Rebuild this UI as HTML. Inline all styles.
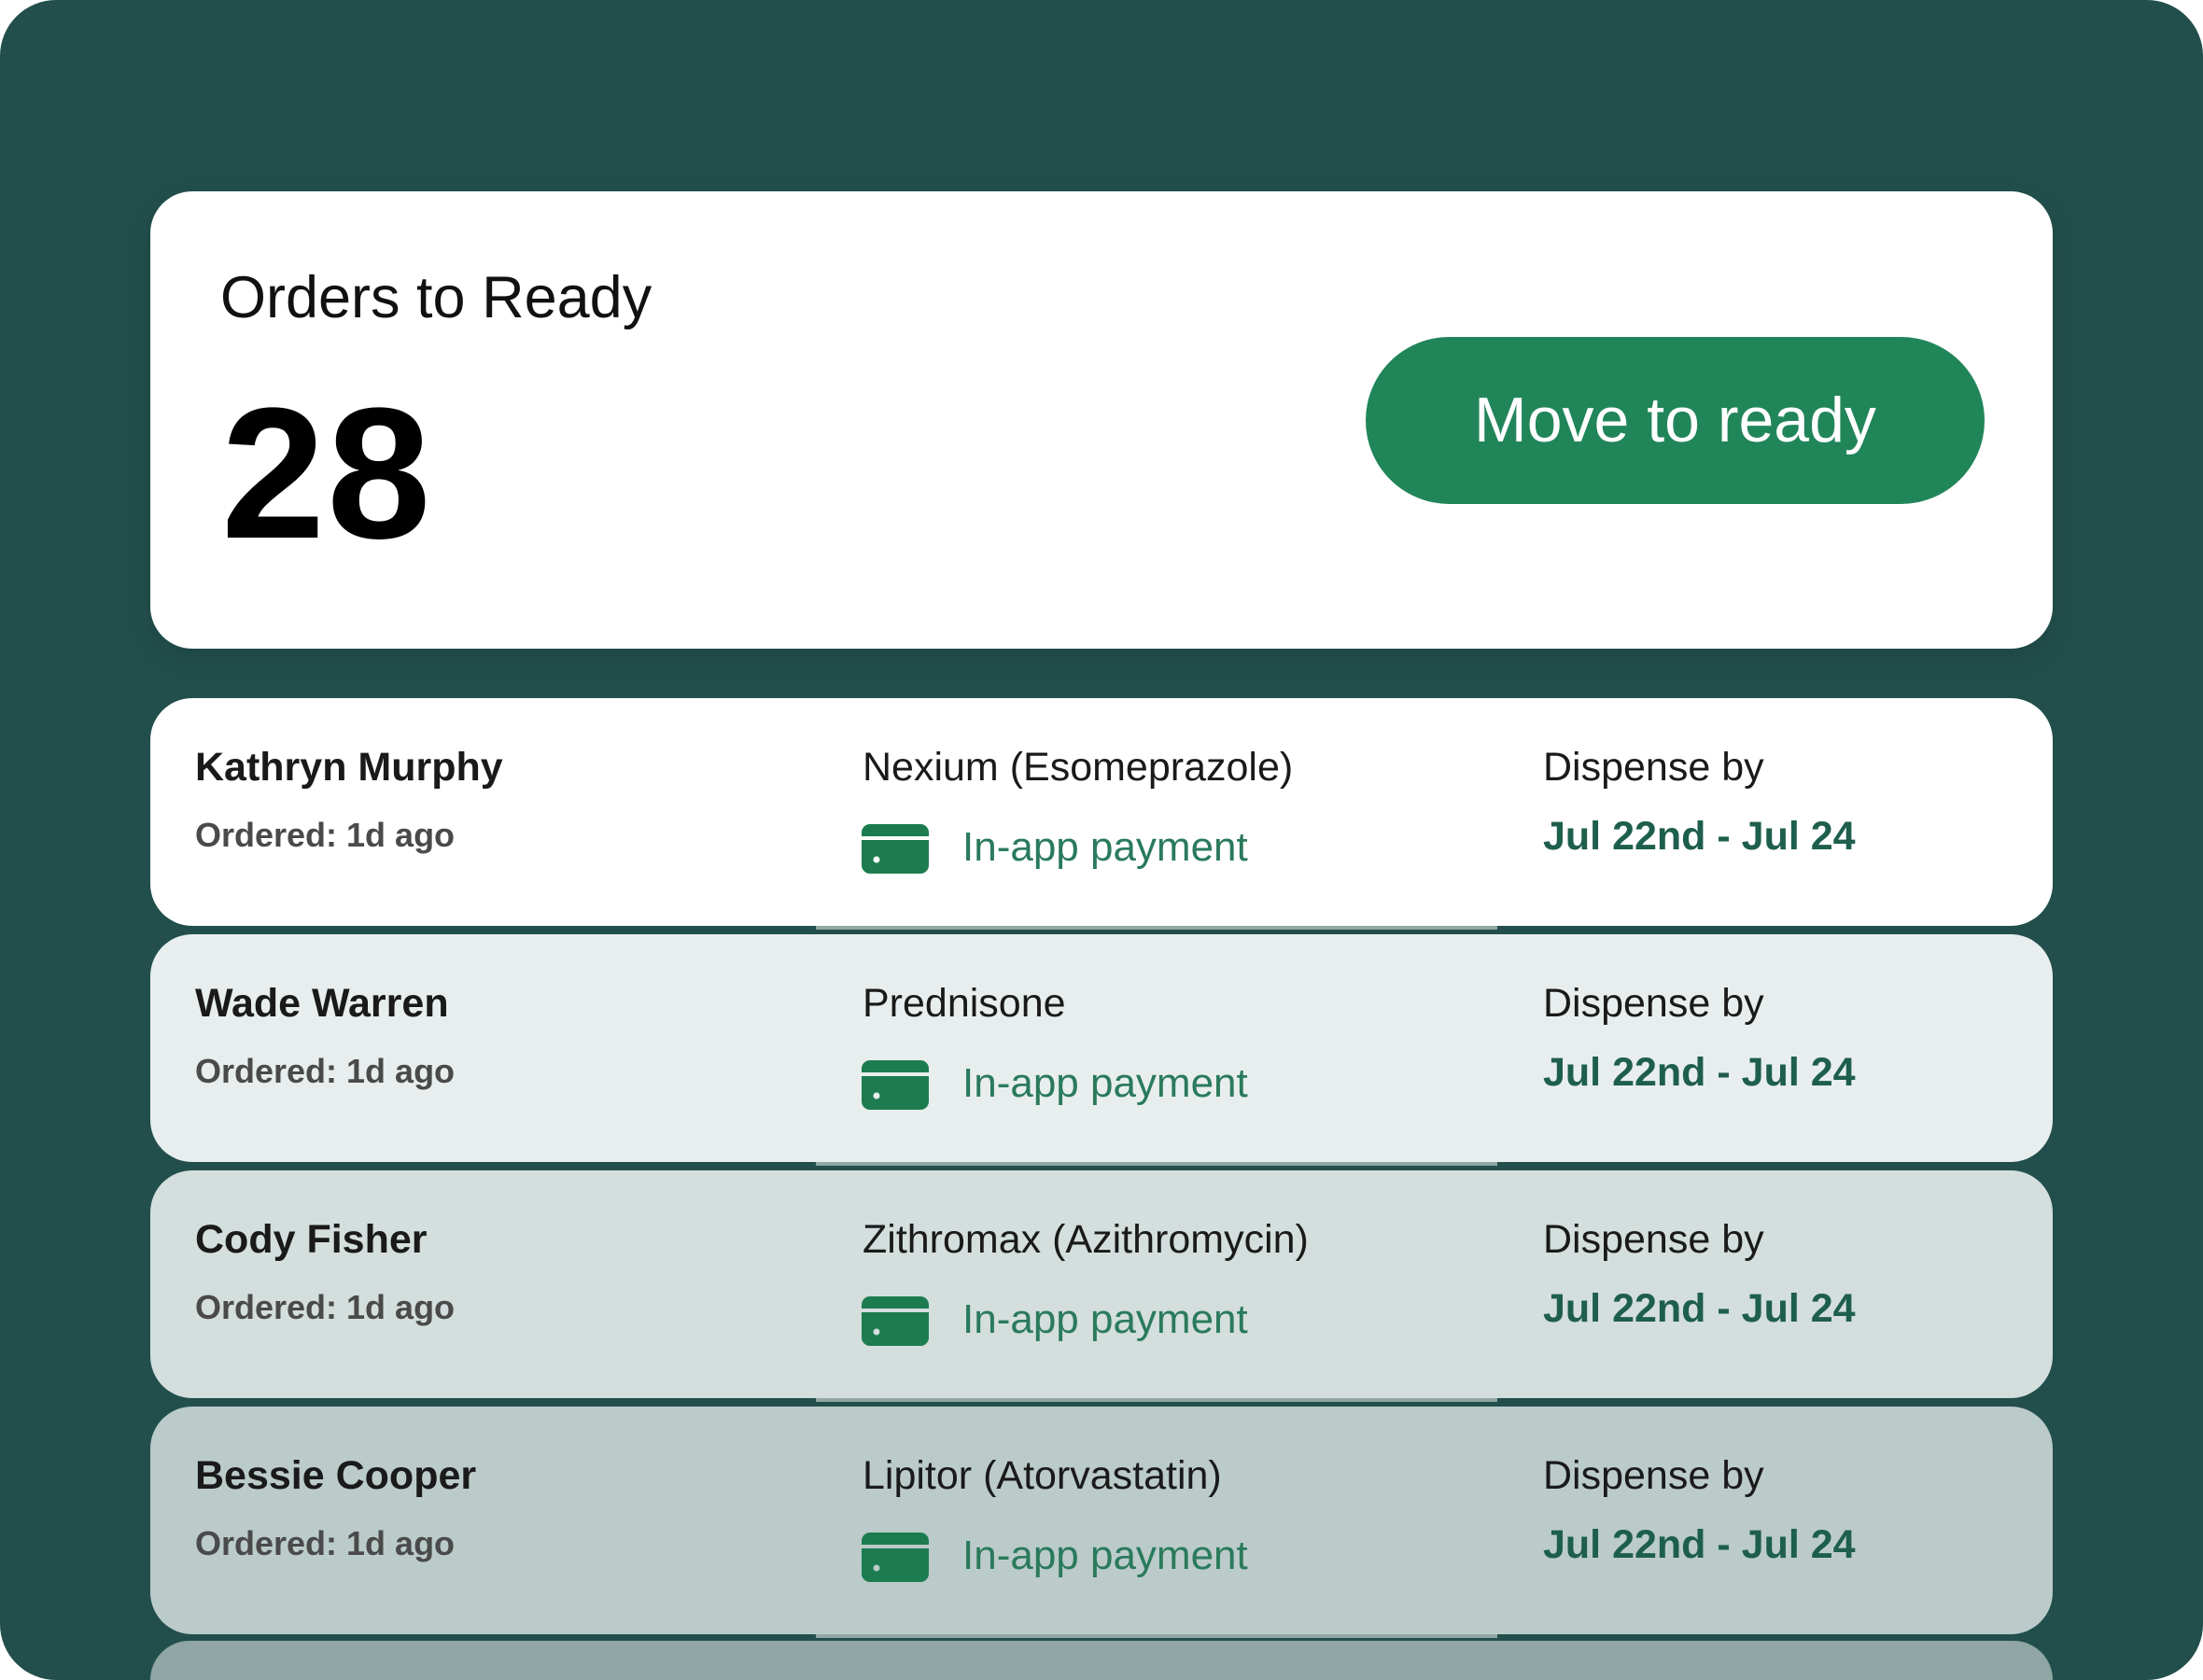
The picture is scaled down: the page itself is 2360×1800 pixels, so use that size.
<!DOCTYPE html>
<html><head><meta charset="utf-8"><style>
html,body{margin:0;padding:0;background:#fff;width:2360px;height:1800px;overflow:hidden;}
body{position:relative;font-family:"Liberation Sans",sans-serif;}
.bg{position:absolute;left:0;top:0;width:2360px;height:1800px;background:#224f4c;border-radius:60px;overflow:hidden;}
.top{position:absolute;left:161px;top:205px;width:2038px;height:490px;background:#fff;border-radius:45px;box-shadow:0 10px 30px rgba(0,0,0,.12);}
.t1{position:absolute;left:75px;top:78px;font-size:63px;color:#111;}
.num{position:absolute;left:76px;top:188px;font-size:200px;font-weight:bold;color:#000;letter-spacing:2px;line-height:1.15;}
.btn{position:absolute;left:1302px;top:156px;width:663px;height:179px;background:#21855a;border-radius:90px;color:#fff;font-size:68px;text-align:center;line-height:179px;}
.row{position:absolute;left:161px;width:2038px;height:244px;border-radius:45px;}
.row .strip{position:absolute;left:713px;width:730px;bottom:-4px;height:4px;background:rgba(255,255,255,.5);}
.nm{position:absolute;left:48px;top:50px;font-size:43px;font-weight:bold;color:#1a1a1a;}
.od{position:absolute;left:48px;top:126px;font-size:36px;font-weight:bold;color:#4a4a4a;}
.md{position:absolute;left:763px;top:50px;font-size:43px;color:#1a1a1a;}
.ic{position:absolute;left:762px;top:135px;width:72px;height:53px;}
.pay{position:absolute;left:870px;top:135px;font-size:44px;color:#2a7a5c;}
.db{position:absolute;left:1492px;top:50px;font-size:43px;color:#1a1a1a;}
.dt{position:absolute;left:1492px;top:124px;font-size:43px;font-weight:bold;color:#1e5e4d;}
</style></head><body>
<div class="bg">
<div class="top">
<div class="t1">Orders to Ready</div>
<div class="num">28</div>
<div class="btn">Move to ready</div>
</div>

<div class="row" style="top:748px;background:#ffffff"><div class="strip"></div>
<div class="nm">Kathryn Murphy</div><div class="od">Ordered: 1d ago</div>
<div class="md">Nexium (Esomeprazole)</div>
<svg class="ic" viewBox="0 0 72 53"><rect x="0" y="0" width="72" height="53" rx="9" fill="#1c7c4f"/><rect x="0" y="13" width="72" height="4" fill="#fff"/><circle cx="16" cy="38" r="3.5" fill="#fff"/></svg>
<div class="pay">In-app payment</div>
<div class="db">Dispense by</div><div class="dt">Jul 22nd - Jul 24</div></div>

<div class="row" style="top:1001px;background:#e8eeee"><div class="strip"></div>
<div class="nm">Wade Warren</div><div class="od">Ordered: 1d ago</div>
<div class="md">Prednisone</div>
<svg class="ic" viewBox="0 0 72 53"><rect x="0" y="0" width="72" height="53" rx="9" fill="#1c7c4f"/><rect x="0" y="13" width="72" height="4" fill="#e8eeee"/><circle cx="16" cy="38" r="3.5" fill="#e8eeee"/></svg>
<div class="pay">In-app payment</div>
<div class="db">Dispense by</div><div class="dt">Jul 22nd - Jul 24</div></div>

<div class="row" style="top:1254px;background:#d3dedd"><div class="strip"></div>
<div class="nm">Cody Fisher</div><div class="od">Ordered: 1d ago</div>
<div class="md">Zithromax (Azithromycin)</div>
<svg class="ic" viewBox="0 0 72 53"><rect x="0" y="0" width="72" height="53" rx="9" fill="#1c7c4f"/><rect x="0" y="13" width="72" height="4" fill="#d3dedd"/><circle cx="16" cy="38" r="3.5" fill="#d3dedd"/></svg>
<div class="pay">In-app payment</div>
<div class="db">Dispense by</div><div class="dt">Jul 22nd - Jul 24</div></div>

<div class="row" style="top:1507px;background:#bbcbca"><div class="strip"></div>
<div class="nm">Bessie Cooper</div><div class="od">Ordered: 1d ago</div>
<div class="md">Lipitor (Atorvastatin)</div>
<svg class="ic" viewBox="0 0 72 53"><rect x="0" y="0" width="72" height="53" rx="9" fill="#1c7c4f"/><rect x="0" y="13" width="72" height="4" fill="#bbcbca"/><circle cx="16" cy="38" r="3.5" fill="#bbcbca"/></svg>
<div class="pay">In-app payment</div>
<div class="db">Dispense by</div><div class="dt">Jul 22nd - Jul 24</div></div>

<div class="row" style="top:1758px;height:42px;border-radius:45px 45px 0 0;background:#8fa6a5"></div>
</div>
</body></html>
